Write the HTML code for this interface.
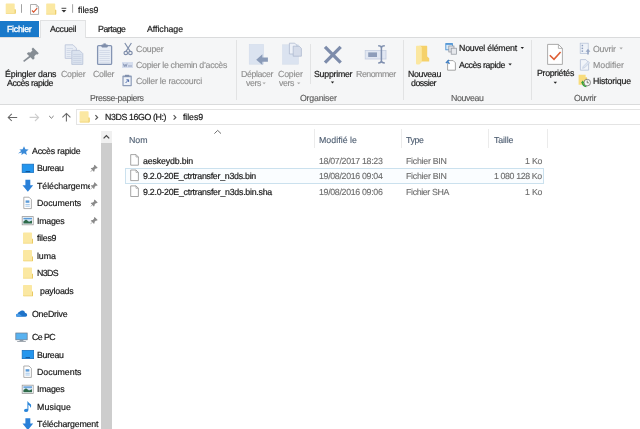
<!DOCTYPE html>
<html><head><meta charset="utf-8"><title>files9</title>
<style>
html,body{margin:0;padding:0;background:#fff;}
body{width:640px;height:429px;overflow:hidden;}
#root{position:relative;width:640px;height:429px;overflow:hidden;background:#fff;font-family:"Liberation Sans",sans-serif;}
.t{text-rendering:geometricPrecision;-webkit-text-stroke:0.12px currentColor;will-change:transform;position:absolute;white-space:nowrap;line-height:12px;height:12px;transform-origin:0 50%;display:block;}
.a{position:absolute;display:block;}

</style></head><body>
<div id="root">
<!-- tab row -->
<div class="a" style="left:0;top:20.5px;width:39.2px;height:16.5px;background:#1979ca"></div>
<div class="a" style="left:0;top:37px;width:640px;height:67.5px;background:#f5f6f7;border-top:1px solid #dadbdc;border-bottom:1px solid #dadbdc;box-sizing:border-box"></div>
<div class="a" style="left:40px;top:20px;width:46px;height:18px;background:#f5f6f7;border:1px solid #e1e2e3;border-bottom:none;box-sizing:border-box"></div>
<!-- ribbon separators -->
<div class="a" style="left:235.5px;top:40px;width:1px;height:60px;background:#e2e3e4"></div>
<div class="a" style="left:309.5px;top:44px;width:1px;height:40px;background:#e2e3e4"></div>
<div class="a" style="left:402.5px;top:40px;width:1px;height:60px;background:#e2e3e4"></div>
<div class="a" style="left:531px;top:40px;width:1px;height:60px;background:#e2e3e4"></div>
<!-- address box -->
<div class="a" style="left:75.8px;top:108.6px;width:570px;height:16.6px;border:1px solid #e4e4e4;box-sizing:border-box;background:#fff"></div>
<!-- scrollbar -->
<div class="a" style="left:101px;top:130.5px;width:11px;height:12.5px;background:#f0f0f0"></div>
<div class="a" style="left:101px;top:143px;width:11px;height:290px;background:#cdcdcd"></div>
<!-- column separators -->
<div class="a" style="left:313.5px;top:129px;width:1px;height:19px;background:#ebebeb"></div>
<div class="a" style="left:400.5px;top:129px;width:1px;height:19px;background:#ebebeb"></div>
<div class="a" style="left:488px;top:129px;width:1px;height:19px;background:#ebebeb"></div>
<div class="a" style="left:547px;top:129px;width:1px;height:19px;background:#ebebeb"></div>
<!-- selection -->
<div class="a" style="left:124.8px;top:168px;width:419.4px;height:15.6px;border:1px solid #cbe1ee;box-sizing:border-box;background:#fafdff"></div>
<svg class="a" style="left:0;top:0" width="640" height="429" viewBox="0 0 640 429">
<defs>
 <!-- small folder 10x12 at origin -->
 <g id="fold">
  <path d="M0 0.7 Q0 0 0.7 0 H8.3 Q9 0 9 0.7 V6.4 H9.5 Q10 6.4 10 6.9 V10.5 Q10 11.2 9.3 11.2 H0.7 Q0 11.2 0 10.5 Z" fill="#fbe8a2"/>
  <path d="M9 6.4 H9.5 Q10 6.4 10 6.9 V10.5 Q10 11.2 9.3 11.2 H8.6 L9 10.4 Z" fill="#e9c962"/>
  <path d="M0 10.3 H9 L8.6 11.2 H0.7 Q0 11.2 0 10.5 Z" fill="#f3da86"/>
 </g>
 <!-- pin small (nav) centered at 0,0 ~7x7 -->
 <g id="npin" fill="#8a8a8a" stroke="none" transform="scale(1.08)">
  <path d="M0.6 -3.4 L3.4 -0.6 L2.5 0.1 L1.9 -0.2 L0.6 1.1 L0.4 2.6 L-0.3 3.0 L-1.2 1.6 L-3.2 3.4 L-3.4 3.2 L-1.6 1.2 L-3.0 0.3 L-2.6 -0.4 L-1.1 -0.6 L0.2 -1.9 L-0.1 -2.5 Z"/>
 </g>
 <g id="dd"><path d="M0 0 H3.4 L1.7 1.9 Z"/></g>
</defs>

<!-- title bar -->
<use href="#fold" transform="translate(5.7 3.4) scale(1 0.92)"/>
<rect x="21" y="4.2" width="1" height="8.6" fill="#a2a2a2"/>
<path d="M30.5 4.5 H36.3 L38.6 6.8 V14.4 H30.5 Z" fill="#fff" stroke="#9b9b9b" stroke-width="0.8"/>
<path d="M36.3 4.5 V6.8 H38.6" fill="none" stroke="#9b9b9b" stroke-width="0.6"/>
<path d="M32 10.5 L33.6 12.1 L37.2 8.1" fill="none" stroke="#d9532c" stroke-width="1.2"/>
<use href="#fold" x="46.2" y="3.4"/>
<rect x="61.5" y="7.8" width="4.8" height="0.9" fill="#333"/>
<path d="M61.5 10 H66.3 L63.9 12.4 Z" fill="#333"/>
<rect x="72.1" y="4.2" width="1" height="8.6" fill="#a2a2a2"/>

<!-- ribbon: pin -->
<path d="M33 47.4 L38.8 53.2 L37.2 54.8 L36.2 54.3 L34.3 56.2 L34.5 58.6 L33 59.8 L26.8 53.8 L28.2 52.3 L30.4 52.5 L32.4 50.5 L31.6 49 Z" fill="#868d94"/>
<path d="M30.6 56 L23.6 61.4" stroke="#868d94" stroke-width="1.6" fill="none"/>
<!-- copier -->
<g stroke="#b7c2d7" stroke-width="0.8">
 <path d="M65.2 44.8 H73 L76.4 48.2 V58.4 H65.2 Z" fill="#e8edf5"/>
 <path d="M71.8 50.4 H79.6 L82.8 53.6 V64.4 H71.8 Z" fill="#dbe3ef"/>
</g>
<g stroke="#bcc7da" stroke-width="0.5">
 <path d="M66.6 48.5H73 M66.6 50.5H70.6 M66.6 52.5H70.6 M66.6 54.5H70.6 M66.6 56.5H70.6"/>
 <path d="M73.2 54.5H81.4 M73.2 56.5H81.4 M73.2 58.5H81.4 M73.2 60.5H81.4 M73.2 62.5H81.4"/>
</g>
<!-- coller clipboard -->
<rect x="97.6" y="45.6" width="14" height="18.8" rx="1" fill="#e9eef6" stroke="#8494b3" stroke-width="1.3"/>
<rect x="101.4" y="44.4" width="6.4" height="3" rx="0.8" fill="#7f8eab"/>
<rect x="103.4" y="43.4" width="2.4" height="1.6" fill="#7f8eab"/>
<g stroke="#bfc9dc" stroke-width="0.5"><path d="M99.4 50.5H109.8 M99.4 52.5H109.8 M99.4 54.5H109.8 M99.4 56.5H109.8 M99.4 58.5H109.8 M99.4 60.5H109.8 M99.4 62.3H109.8"/></g>
<!-- scissors -->
<g fill="none" stroke="#7f8eab" stroke-width="1.15">
 <path d="M124.8 43 L130.2 51.4 M131.4 43 L126 51.4"/>
 <ellipse cx="125.8" cy="53" rx="1.8" ry="1.6"/>
 <ellipse cx="130.4" cy="53" rx="1.8" ry="1.6"/>
</g>
<!-- copy path icon -->
<rect x="122" y="62" width="11" height="6" fill="#d5dded"/>
<path d="M123.3 63.6 L124.3 66.6 L125.2 64.4 L126.1 66.6 L127.1 63.6" fill="none" stroke="#6f7fa3" stroke-width="0.7"/>
<rect x="128" y="65.6" width="4" height="0.8" fill="#8a98b6"/>
<!-- paste shortcut icon -->
<rect x="122.4" y="75.6" width="9.4" height="10.6" rx="0.8" fill="#8d9cb8"/>
<rect x="123.6" y="77.2" width="7" height="7.8" fill="#eef2f8"/>
<rect x="125" y="74.8" width="4.2" height="1.8" fill="#7f8eab"/>
<path d="M125.6 83 L128.4 80 M126.4 79.8 H128.6 V82" fill="none" stroke="#4463a6" stroke-width="0.9"/>

<!-- deplacer vers -->
<rect x="249.2" y="44.4" width="14.4" height="19.8" fill="#dbe3f0" stroke="#d0d9e9" stroke-width="0.5"/>
<path d="M256.2 59.7 L262.4 54.2 V57.5 H267.9 V61.8 H262.4 V65 Z" fill="#8a9bb8"/>
<!-- copier vers -->
<rect x="282.6" y="44.8" width="15.8" height="19.4" fill="#dbe3f0" stroke="#d0d9e9" stroke-width="0.5"/>
<g stroke="#a9b5cd" stroke-width="0.7">
 <path d="M289.4 43.2 H294.8 L296.8 45.2 V54 H289.4 Z" fill="#edf1f8"/>
 <path d="M293.2 46.2 H299.2 L301.4 48.4 V56.2 H293.2 Z" fill="#d5dcea"/>
</g>
<!-- X -->
<path d="M325 46.8 L340.7 62.6 M340.7 46.8 L325 62.6" stroke="#7d8cab" stroke-width="3.3" fill="none"/>
<!-- renommer -->
<rect x="365.2" y="50.4" width="20.8" height="8.6" fill="#e1e7f2" stroke="#c3cde0" stroke-width="0.8"/>
<rect x="368.2" y="52.4" width="8.8" height="4.6" fill="#8e9dba"/>
<path d="M378.2 45.8 Q381.4 45.8 381.4 48 V60.8 Q381.4 63 378.2 63 M384.8 45.8 Q381.4 45.8 381.4 48 M381.4 60.8 Q381.4 63 384.8 63" fill="none" stroke="#7f8fae" stroke-width="1.5"/>
<!-- dropdown arrows -->
<use href="#dd" x="262.4" y="82.4" fill="#a8a8a8"/>
<use href="#dd" x="297" y="82.4" fill="#a8a8a8"/>
<use href="#dd" x="330.8" y="81.6" fill="#222"/>
<use href="#dd" x="520.6" y="47" fill="#222"/>
<use href="#dd" x="508.4" y="63.6" fill="#222"/>
<use href="#dd" x="553.6" y="81.8" fill="#222"/>
<use href="#dd" x="619.4" y="47.6" fill="#a8a8a8"/>

<!-- nouveau dossier folder -->
<path d="M419.6 45.8 H426.6 Q427.2 45.8 427.2 46.4 V56.6 L429.2 58.2 V61.6 H419.6 Z" fill="#f5d16a"/>
<path d="M416 46.6 Q416 45.8 416.8 45.8 H420.4 L421.8 47.2 V62 L419.4 64.4 H416.8 Q416 64.4 416 63.6 Z" fill="#fbe7a0"/>
<!-- nouvel element icon -->
<rect x="445.8" y="43.6" width="6.6" height="6.2" fill="#d9eaf8" stroke="#4f94d4" stroke-width="0.9"/>
<rect x="445.8" y="43.4" width="6.6" height="1.4" fill="#4f94d4"/>
<rect x="448.8" y="46" width="5.2" height="6" fill="#dfe2e7" stroke="#8d929b" stroke-width="0.7"/>
<rect x="451.2" y="48.2" width="5.2" height="6" fill="#e6e8ec" stroke="#8d929b" stroke-width="0.7"/>
<!-- acces rapide icon -->
<path d="M447.6 60.6 H453.2 L455.4 62.8 V70.2 H447.6 Z" fill="#fff" stroke="#8f8f8f" stroke-width="0.8"/>
<path d="M445.4 62.6 L448.6 59.4 L449.6 60.4 L448.4 61.6 L450 63.2 L449 64.2 L447.4 62.6 L446.4 63.6 Z" fill="#3d7fc6"/>

<!-- proprietes -->
<path d="M547.6 44.4 H558.4 L562.4 48.4 V64.4 H547.6 Z" fill="#fff" stroke="#a3a3a3" stroke-width="0.9"/>
<path d="M558.4 44.4 V48.4 H562.4" fill="none" stroke="#a3a3a3" stroke-width="0.8"/>
<path d="M549.8 55.2 L554 59.4 L560.6 52" fill="none" stroke="#de5f36" stroke-width="1.6"/>
<!-- ouvrir icon -->
<rect x="580.2" y="43.2" width="8" height="10.4" fill="#eef2f8" stroke="#b3bfd6" stroke-width="0.7"/>
<g fill="#8fa0c0"><rect x="581.6" y="44.8" width="1.5" height="1.5"/><rect x="581.6" y="47.6" width="1.5" height="1.5"/><rect x="581.6" y="50.4" width="1.5" height="1.5"/></g>
<path d="M587.2 54.6 V51.8 H585.6 L588 48.8 L590.4 51.8 H588.8 V54.6 Z" fill="#95a5c3"/>
<!-- modifier icon -->
<path d="M580.4 59.6 H585.8 L588.6 62.4 V70.2 H580.4 Z" fill="#f1f4f9" stroke="#b3bfd6" stroke-width="0.8"/>
<path d="M582.6 68.4 L583.2 66.4 L588.2 61.4 L589.6 62.8 L584.6 67.8 Z" fill="#dde4f0" stroke="#b3bfd6" stroke-width="0.5"/>
<!-- historique icon -->
<path d="M578.6 74.8 H585.6 V77.6 H586.8 V84.8 H578.6 Z" fill="#f8dc7c"/>
<path d="M585.6 77.6 H586.8 V84.8 H585.6 Z" fill="#e8c458"/>
<circle cx="587.2" cy="82.6" r="3.3" fill="#f6f8f6" stroke="#6e6e6e" stroke-width="0.8"/>
<path d="M587.2 80.6 V82.8 H588.8" fill="none" stroke="#444" stroke-width="0.7"/>
<path d="M586.4 86.6 Q582.6 86.2 582.6 82.6" fill="none" stroke="#38a03e" stroke-width="1.4"/>
<path d="M580.8 83.2 L582.6 80.6 L584.6 83.2 Z" fill="#38a03e"/>

<!-- address bar arrows -->
<g fill="none" stroke="#666" stroke-width="1.05">
 <path d="M17.2 117.4 H8.2 M11.8 113.8 L8.2 117.4 L11.8 121"/>
 <path d="M66.4 121.4 V113.6 M62.4 117.4 L66.4 113.4 L70.4 117.4"/>
</g>
<path d="M29.6 117.4 H38.6 M35 113.8 L38.6 117.4 L35 121" fill="none" stroke="#cdcdcd" stroke-width="1.1"/>
<path d="M49.2 116 L51.4 118.2 L53.6 116" fill="none" stroke="#666" stroke-width="0.9"/>
<use href="#fold" x="79.6" y="111.2" transform="scale(1)"/>
<path d="M95.4 115.2 L97.6 117.4 L95.4 119.6" fill="none" stroke="#555" stroke-width="1.2"/>
<path d="M173.6 115.2 L175.8 117.4 L173.6 119.6" fill="none" stroke="#555" stroke-width="1.2"/>

<!-- scroll up arrow -->
<path d="M103.6 138.4 L106.4 135.6 L109.2 138.4" fill="none" stroke="#444" stroke-width="1.3"/>
<!-- sort indicator -->
<path d="M214.4 133.6 L217.7 130.4 L221 133.6" fill="none" stroke="#6e6e6e" stroke-width="1"/>

<!-- file icons -->
<g fill="#fff" stroke="#8f8f8f" stroke-width="0.8">
<path d="M130.7 154.6 H136 L138.4 157.0 V165.2 H130.7 Z"/>
<path d="M130.7 170 H136 L138.4 172.4 V180.6 H130.7 Z"/>
<path d="M130.7 185.9 H136 L138.4 188.3 V196.5 H130.7 Z"/>
</g>
<g fill="none" stroke="#8f8f8f" stroke-width="0.6"><path d="M136 154.6 V157.0 H138.4 M136 170 V172.4 H138.4 M136 185.9 V188.3 H138.4"/></g>

<!-- nav: star -->
<path d="M24 146.2 L25.4 149.3 L28.6 149.6 L26.1 151.8 L26.9 155 L24 153.3 L21.4 154.9 L21.8 152.6 L18 153.6 L21.2 151 L19.4 149.6 L22.6 149.3 Z" fill="#3a8ad8"/>
<!-- bureau -->
<rect x="22.2" y="164.2" width="11.4" height="8.2" fill="#2496ee" stroke="#1872c2" stroke-width="0.8"/>
<rect x="25.6" y="171" width="4.6" height="0.9" fill="#0f4f8f"/>
<!-- download arrow -->
<path d="M25.4 179.8 H30.3 V185.2 H33.2 L27.85 191.7 L22.5 185.2 H25.4 Z" fill="#2a80d8"/>
<!-- documents -->
<path d="M23.8 197.2 H29 L31.4 199.6 V208.6 H23.8 Z" fill="#fff" stroke="#9a9a9a" stroke-width="0.8"/>
<rect x="25.6" y="200.4" width="3.8" height="2.4" fill="#5b9bd8"/>
<path d="M25.4 204.4H29.8 M25.4 206.2H29.8" stroke="#7aaede" stroke-width="0.7"/>
<!-- images -->
<rect x="22.2" y="216.6" width="11" height="8.2" fill="#fff" stroke="#9a9a9a" stroke-width="0.8"/>
<rect x="23.4" y="217.8" width="8.6" height="5.8" fill="#cfe3f6"/>
<path d="M23.4 223.6 V221.4 L26 219.6 L29 221.8 L32 220.6 V223.6 Z" fill="#2f6b4a"/>
<rect x="23.4" y="217.8" width="8.6" height="1.4" fill="#5b9bd8"/>
<!-- nav pins -->
<use href="#npin" x="94" y="168.4"/>
<use href="#npin" x="94" y="185.8"/>
<use href="#npin" x="94" y="203.2"/>
<use href="#npin" x="94" y="220.6"/>
<!-- nav folders -->
<use href="#fold" x="23" y="232.4"/>
<use href="#fold" x="23" y="250"/>
<use href="#fold" x="23" y="267.4"/>
<use href="#fold" x="23" y="285"/>
<!-- onedrive -->
<path d="M17.6 316.8 Q15.8 316.8 16 315.2 Q16.2 313.8 17.8 313.8 Q18 311.8 20 311.6 Q21 310 23 310.5 Q24.8 311 25 312.8 Q27.2 313 27.2 315 Q27.2 316.8 25.4 316.8 Z" fill="#1e73c9"/><path d="M17.6 316.8 Q15.8 316.8 16 315.2 Q16.2 313.8 17.8 313.8 Q19.6 313.4 20.6 315 Q21.8 315 21.8 316.8 Z" fill="#4a9be6"/>
<!-- ce pc -->
<rect x="15.8" y="333" width="11.4" height="6.8" fill="#58b2f0" stroke="#6a7a8c" stroke-width="0.7"/>
<rect x="19.6" y="340.2" width="3.8" height="0.8" fill="#7a8794"/>
<rect x="17.2" y="341" width="8.6" height="0.8" fill="#8a949e"/>
<!-- bureau 2 -->
<rect x="22.2" y="350.4" width="11.4" height="8.2" fill="#2496ee" stroke="#1872c2" stroke-width="0.8"/>
<rect x="25.6" y="357.2" width="4.4" height="0.9" fill="#0f4f8f"/>
<!-- documents 2 -->
<path d="M23.8 366 H29 L31.4 368.4 V377.4 H23.8 Z" fill="#fff" stroke="#9a9a9a" stroke-width="0.8"/>
<rect x="25.6" y="369.2" width="3.8" height="2.4" fill="#5b9bd8"/>
<path d="M25.4 373.2H29.8 M25.4 375H29.8" stroke="#7aaede" stroke-width="0.7"/>
<!-- images 2 -->
<rect x="22.2" y="385.2" width="11" height="8.2" fill="#fff" stroke="#9a9a9a" stroke-width="0.8"/>
<rect x="23.4" y="386.4" width="8.6" height="5.8" fill="#cfe3f6"/>
<path d="M23.4 392.2 V390 L26 388.2 L29 390.4 L32 389.2 V392.2 Z" fill="#2f6b4a"/>
<rect x="23.4" y="386.4" width="8.6" height="1.4" fill="#5b9bd8"/>
<!-- musique -->
<path d="M27.4 401 Q29 403 31 404.6 Q31.6 406.6 30.4 408 Q30.4 405.8 28.4 404.8 V410 Q28.4 412 26.2 412 Q24 412 24 410.4 Q24 408.8 26.2 408.8 Q26.8 408.8 27.4 409 Z" fill="#2a86da"/>
<!-- telechargement 2 -->
<path d="M25.4 418.2 H30.3 V423.6 H33.2 L27.85 430.1 L22.5 423.6 H25.4 Z" fill="#2a80d8"/>
</svg>

<span class="t" style="left:78px;top:3.5px;color:#222;font-weight:400;font-size:8.8px;letter-spacing:-0.008px;-webkit-text-stroke-width:0.2px">files9</span>
<span class="t" style="left:7px;top:23.2px;color:#fff;font-weight:400;font-size:8.8px;letter-spacing:-0.272px;-webkit-text-stroke-width:0.35px">Fichier</span>
<span class="t" style="left:49.8px;top:23.4px;color:#222;font-weight:400;font-size:8.8px;letter-spacing:-0.337px;-webkit-text-stroke-width:0.2px">Accueil</span>
<span class="t" style="left:97.5px;top:23.4px;color:#222;font-weight:400;font-size:8.8px;letter-spacing:-0.473px;-webkit-text-stroke-width:0.2px">Partage</span>
<span class="t" style="left:146.5px;top:23.4px;color:#222;font-weight:400;font-size:8.8px;letter-spacing:-0.059px;-webkit-text-stroke-width:0.2px">Affichage</span>
<span class="t" style="left:4.7px;top:68.0px;color:#1a1a1a;font-weight:400;font-size:8.8px;letter-spacing:-0.192px;-webkit-text-stroke-width:0.2px">Épingler dans</span>
<span class="t" style="left:7px;top:77.2px;color:#1a1a1a;font-weight:400;font-size:8.8px;letter-spacing:-0.405px;-webkit-text-stroke-width:0.2px">Accès rapide</span>
<span class="t" style="left:61px;top:68.0px;color:#8e8e8e;font-weight:400;font-size:8.8px;letter-spacing:-0.270px">Copier</span>
<span class="t" style="left:93.2px;top:68.0px;color:#8e8e8e;font-weight:400;font-size:8.8px;letter-spacing:-0.297px">Coller</span>
<span class="t" style="left:136px;top:43.0px;color:#8e8e8e;font-weight:400;font-size:8.8px;letter-spacing:-0.227px">Couper</span>
<span class="t" style="left:136px;top:59.0px;color:#8e8e8e;font-weight:400;font-size:8.8px;letter-spacing:-0.303px">Copier le chemin d’accès</span>
<span class="t" style="left:136px;top:75.0px;color:#8e8e8e;font-weight:400;font-size:8.8px;letter-spacing:-0.232px">Coller le raccourci</span>
<span class="t" style="left:90px;top:91.8px;color:#5a5a5a;font-weight:400;font-size:8.8px;letter-spacing:-0.405px">Presse-papiers</span>
<span class="t" style="left:240.7px;top:68.0px;color:#8e8e8e;font-weight:400;font-size:8.8px;letter-spacing:-0.402px">Déplacer</span>
<span class="t" style="left:246px;top:77.0px;color:#8e8e8e;font-weight:400;font-size:8.8px;letter-spacing:-0.406px">vers</span>
<span class="t" style="left:277.8px;top:68.0px;color:#8e8e8e;font-weight:400;font-size:8.8px;letter-spacing:-0.204px">Copier</span>
<span class="t" style="left:279px;top:77.0px;color:#8e8e8e;font-weight:400;font-size:8.8px;letter-spacing:-0.406px">vers</span>
<span class="t" style="left:313.5px;top:68.0px;color:#1a1a1a;font-weight:400;font-size:8.8px;letter-spacing:-0.255px;-webkit-text-stroke-width:0.2px">Supprimer</span>
<span class="t" style="left:355.7px;top:68.0px;color:#8e8e8e;font-weight:400;font-size:8.8px;letter-spacing:-0.477px">Renommer</span>
<span class="t" style="left:299.7px;top:91.8px;color:#5a5a5a;font-weight:400;font-size:8.8px;letter-spacing:-0.225px">Organiser</span>
<span class="t" style="left:407.5px;top:68.0px;color:#1a1a1a;font-weight:400;font-size:8.8px;letter-spacing:-0.317px;-webkit-text-stroke-width:0.2px">Nouveau</span>
<span class="t" style="left:411px;top:76.7px;color:#1a1a1a;font-weight:400;font-size:8.8px;letter-spacing:-0.480px;-webkit-text-stroke-width:0.2px">dossier</span>
<span class="t" style="left:459px;top:42.0px;color:#1a1a1a;font-weight:400;font-size:8.8px;letter-spacing:-0.223px;-webkit-text-stroke-width:0.2px">Nouvel élément</span>
<span class="t" style="left:459px;top:58.6px;color:#1a1a1a;font-weight:400;font-size:8.8px;letter-spacing:-0.405px;-webkit-text-stroke-width:0.2px">Accès rapide</span>
<span class="t" style="left:450.6px;top:91.8px;color:#5a5a5a;font-weight:400;font-size:8.8px;letter-spacing:-0.403px">Nouveau</span>
<span class="t" style="left:537px;top:67.0px;color:#1a1a1a;font-weight:400;font-size:8.8px;letter-spacing:-0.309px;-webkit-text-stroke-width:0.2px">Propriétés</span>
<span class="t" style="left:593px;top:42.5px;color:#8e8e8e;font-weight:400;font-size:8.8px;letter-spacing:-0.226px">Ouvrir</span>
<span class="t" style="left:593px;top:58.7px;color:#8e8e8e;font-weight:400;font-size:8.8px;letter-spacing:-0.037px">Modifier</span>
<span class="t" style="left:593px;top:75.3px;color:#1a1a1a;font-weight:400;font-size:8.8px;letter-spacing:-0.161px;-webkit-text-stroke-width:0.2px">Historique</span>
<span class="t" style="left:573.6px;top:91.8px;color:#5a5a5a;font-weight:400;font-size:8.8px;letter-spacing:-0.309px">Ouvrir</span>
<span class="t" style="left:105px;top:111.0px;color:#1a1a1a;font-weight:400;font-size:8.8px;letter-spacing:-0.392px;-webkit-text-stroke-width:0.2px">N3DS 16GO (H:)</span>
<span class="t" style="left:183px;top:111.0px;color:#1a1a1a;font-weight:400;font-size:8.8px;letter-spacing:-0.091px;-webkit-text-stroke-width:0.2px">files9</span>
<span class="t" style="left:128.5px;top:133.7px;color:#4d5d70;font-weight:400;font-size:8.8px;letter-spacing:-0.026px">Nom</span>
<span class="t" style="left:319px;top:133.7px;color:#4d5d70;font-weight:400;font-size:8.8px;letter-spacing:0.034px">Modifié le</span>
<span class="t" style="left:406.4px;top:133.7px;color:#4d5d70;font-weight:400;font-size:8.8px;letter-spacing:-0.370px">Type</span>
<span class="t" style="left:493.8px;top:133.7px;color:#4d5d70;font-weight:400;font-size:8.8px;letter-spacing:-0.141px">Taille</span>
<span class="t" style="left:143px;top:155.1px;color:#1a1a1a;font-weight:400;font-size:8.8px;letter-spacing:-0.154px;-webkit-text-stroke-width:0.2px">aeskeydb.bin</span>
<span class="t" style="left:143px;top:170.0px;color:#1a1a1a;font-weight:400;font-size:8.8px;letter-spacing:-0.260px;-webkit-text-stroke-width:0.2px">9.2.0-20E_ctrtransfer_n3ds.bin</span>
<span class="t" style="left:143px;top:185.5px;color:#1a1a1a;font-weight:400;font-size:8.8px;letter-spacing:-0.248px;-webkit-text-stroke-width:0.2px">9.2.0-20E_ctrtransfer_n3ds.bin.sha</span>
<span class="t" style="left:319px;top:155.1px;color:#6d6d6d;font-weight:400;font-size:8.8px;letter-spacing:-0.312px">18/07/2017 18:23</span>
<span class="t" style="left:319px;top:170.0px;color:#6d6d6d;font-weight:400;font-size:8.8px;letter-spacing:-0.312px">19/08/2016 09:04</span>
<span class="t" style="left:319px;top:185.5px;color:#6d6d6d;font-weight:400;font-size:8.8px;letter-spacing:-0.312px">19/08/2016 09:06</span>
<span class="t" style="left:406.4px;top:155.1px;color:#6d6d6d;font-weight:400;font-size:8.8px;letter-spacing:-0.265px">Fichier BIN</span>
<span class="t" style="left:406.4px;top:170.0px;color:#6d6d6d;font-weight:400;font-size:8.8px;letter-spacing:-0.265px">Fichier BIN</span>
<span class="t" style="left:406.4px;top:185.5px;color:#6d6d6d;font-weight:400;font-size:8.8px;letter-spacing:-0.349px">Fichier SHA</span>
<span class="t" style="left:524.5px;top:155.1px;color:#6d6d6d;font-weight:400;font-size:8.8px;letter-spacing:-0.227px">1 Ko</span>
<span class="t" style="left:494px;top:170.0px;color:#6d6d6d;font-weight:400;font-size:8.8px;letter-spacing:-0.387px">1 080 128 Ko</span>
<span class="t" style="left:524.5px;top:185.5px;color:#6d6d6d;font-weight:400;font-size:8.8px;letter-spacing:-0.227px">1 Ko</span>
<span class="t" style="left:31.5px;top:144.8px;color:#1a1a1a;font-weight:400;font-size:8.8px;letter-spacing:-0.197px;-webkit-text-stroke-width:0.2px">Accès rapide</span>
<span class="t" style="left:37.3px;top:162.4px;color:#1a1a1a;font-weight:400;font-size:8.8px;letter-spacing:-0.279px;-webkit-text-stroke-width:0.2px">Bureau</span>
<span class="t" style="left:37.3px;top:179.8px;color:#1a1a1a;font-weight:400;font-size:8.8px;letter-spacing:-0.059px;-webkit-text-stroke-width:0.2px;width:52.9px;overflow:hidden">Téléchargements</span>
<span class="t" style="left:37.3px;top:197.2px;color:#1a1a1a;font-weight:400;font-size:8.8px;letter-spacing:-0.033px;-webkit-text-stroke-width:0.2px">Documents</span>
<span class="t" style="left:37.3px;top:214.6px;color:#1a1a1a;font-weight:400;font-size:8.8px;letter-spacing:-0.260px;-webkit-text-stroke-width:0.2px">Images</span>
<span class="t" style="left:37.3px;top:232.0px;color:#1a1a1a;font-weight:400;font-size:8.8px;letter-spacing:-0.208px;-webkit-text-stroke-width:0.2px">files9</span>
<span class="t" style="left:37.3px;top:249.6px;color:#1a1a1a;font-weight:400;font-size:8.8px;letter-spacing:-0.095px;-webkit-text-stroke-width:0.2px">luma</span>
<span class="t" style="left:37.3px;top:267.0px;color:#1a1a1a;font-weight:400;font-size:8.8px;letter-spacing:-0.617px;-webkit-text-stroke-width:0.2px">N3DS</span>
<span class="t" style="left:40px;top:284.6px;color:#1a1a1a;font-weight:400;font-size:8.8px;letter-spacing:-0.227px;-webkit-text-stroke-width:0.2px">payloads</span>
<span class="t" style="left:31.6px;top:307.5px;color:#1a1a1a;font-weight:400;font-size:8.8px;letter-spacing:-0.220px;-webkit-text-stroke-width:0.2px">OneDrive</span>
<span class="t" style="left:31.6px;top:331.0px;color:#1a1a1a;font-weight:400;font-size:8.8px;letter-spacing:-0.564px;-webkit-text-stroke-width:0.2px">Ce PC</span>
<span class="t" style="left:37.3px;top:348.6px;color:#1a1a1a;font-weight:400;font-size:8.8px;letter-spacing:-0.279px;-webkit-text-stroke-width:0.2px">Bureau</span>
<span class="t" style="left:37.3px;top:366.0px;color:#1a1a1a;font-weight:400;font-size:8.8px;letter-spacing:0.000px;-webkit-text-stroke-width:0.2px">Documents</span>
<span class="t" style="left:37.3px;top:383.3px;color:#1a1a1a;font-weight:400;font-size:8.8px;letter-spacing:-0.260px;-webkit-text-stroke-width:0.2px">Images</span>
<span class="t" style="left:37.3px;top:400.8px;color:#1a1a1a;font-weight:400;font-size:8.8px;letter-spacing:0.105px;-webkit-text-stroke-width:0.2px">Musique</span>
<span class="t" style="left:37.3px;top:418.2px;color:#1a1a1a;font-weight:400;font-size:8.8px;letter-spacing:-0.163px;-webkit-text-stroke-width:0.2px">Téléchargement</span>
</div>
</body></html>
